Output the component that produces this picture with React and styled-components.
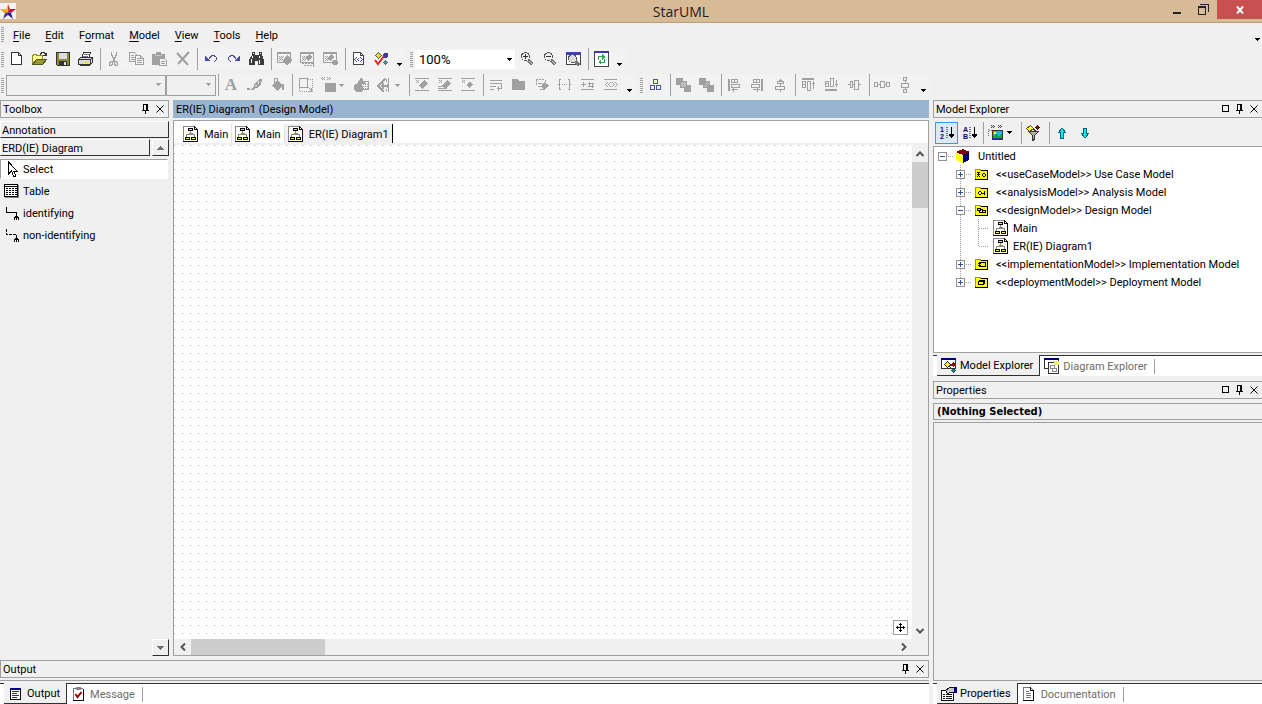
import React from 'react';
import styled, { createGlobalStyle, css } from 'styled-components';

const GRAY = '#a0a0a0';
const DARK = '#303030';
const FACE = '#f0f0f0';

const GlobalStyle = createGlobalStyle`
	* {
		box-sizing: border-box;
	}
	body {
		margin: 0;
	}
	body,
	button,
	select {
		font-family: Roboto, 'Noto Sans', sans-serif;
		font-size: 11px;
		color: #000;
	}
	button {
		margin: 0;
		padding: 0;
		border: 0;
		background: none;
		white-space: nowrap;
	}
`;

/* ---------- icons ---------- */

const Svg = ({ w = 16, h = 16, children, ...rest }) => (
	<svg
		width={w}
		height={h}
		viewBox={`0 0 ${w} ${h}`}
		fill="none"
		shapeRendering="crispEdges"
		aria-hidden="true"
		{...rest}
	>
		{children}
	</svg>
);

const StarIcon = () => (
	<Svg shapeRendering="auto">
		<path fill="#f4f4f8" d="M0 0h16v16H0z" />
		<path fill="#f5c400" d="M8 1l-2 5H0l5 4 3-1z" />
		<path fill="#e03030" d="M8 1l2 5-2 3z" />
		<path fill="#b81840" d="M10 6h6l-5 4-3-1z" />
		<path fill="#28209a" d="M8 9l3 1 2 6-5-4z" />
		<path fill="#5a3090" d="M8 9l-3 1-2 6 5-4z" />
		<path fill="#f09020" d="M0 6l8 3-3 1z" />
	</Svg>
);

const NewIcon = () => (
	<Svg>
		<path fill="#fff" stroke="#333" d="M3.5 1.5h7l3 3v9h-10z" />
		<path stroke="#333" d="M10.5 1v3.5H14" />
	</Svg>
);
const OpenIcon = () => (
	<Svg>
		<path fill="#ffff8c" stroke="#8a8a2a" d="M1.5 13.5v-9h1v-1h3v1h6v4" />
		<path fill="#9a9a32" stroke="#55551c" d="M1.5 13.5l4-5h10l-4 5z" />
		<path stroke="#333" d="M9 3.5v-1h1v-1h3v1h1v2M12 4.5h3M15.5 2v3" />
	</Svg>
);
const SaveIcon = () => (
	<Svg>
		<path fill="#8c8c34" stroke="#333" d="M2.5 1.5h13v13h-12l-1-1z" />
		<path fill="#dcdcdc" d="M5 2h8v6H5z" />
		<path fill="#333" d="M5 10h8v4H5z" />
		<path fill="#dcdcdc" d="M10 11h2v3h-2z" />
	</Svg>
);
const PrintIcon = () => (
	<Svg>
		<path fill="#fff" stroke="#333" d="M4.5 7.5l2-6h7l-2 6z" />
		<path stroke="#777" d="M7 3.5h5M6 5.5h5" />
		<path fill="#d8d8d8" stroke="#333" d="M1.5 8.5l2-2h12v5l-2 2h-12z" />
		<path stroke="#333" d="M1 8.5h12v5M3 14.5h10M13.5 8.5l2-2" />
		<path stroke="#e6e000" d="M8 11.5h3" />
	</Svg>
);
const CutIcon = () => (
	<Svg>
		<path stroke={GRAY} d="M6 1v3h1v2h1v2h1v2h1M11 1v3h-1v2H9v2H8v2H7" />
		<path stroke={GRAY} d="M5.5 10.5h2v3h-1v1h-2v-3h1zM9.5 10.5h2v1h1v3h-2v-1h-1z" />
	</Svg>
);
const CopyIcon = () => (
	<Svg>
		<path fill="#f4f4f4" stroke={GRAY} d="M1.5 1.5h5l3 3v6h-8z" />
		<path stroke={GRAY} d="M3 4.5h3M3 6.5h4M3 8.5h4" />
		<path fill="#f4f4f4" stroke={GRAY} d="M7.5 4.5h5l3 3v6h-8z" />
		<path stroke={GRAY} d="M9 7.5h3M9 9.5h5M9 11.5h5M12.5 4.5v3h3" />
	</Svg>
);
const PasteIcon = () => (
	<Svg>
		<path fill={GRAY} d="M1 3h4V1h5v2h4v11H1z" />
		<path stroke="#e4e4e4" strokeDasharray="1 1" d="M4 4.5h7" />
		<path fill="#f4f4f4" stroke={GRAY} d="M8.5 7.5h5l2 2v5h-7z" />
		<path stroke={GRAY} d="M10 10.5h4M10 12.5h4" />
	</Svg>
);
const DeleteIcon = () => (
	<Svg shapeRendering="auto">
		<path stroke={GRAY} strokeWidth="2" d="M3 2l11 12M15 1L4 13" />
	</Svg>
);
const UndoIcon = () => (
	<Svg>
		<path fill="#4848b0" d="M3 5h1v1h1v1h1v1h1v1h1v1H3z" />
		<path
			stroke="#4848b0"
			d="M7 7.5h1M7 6.5h2M8 5.5h2M9 4.5h4M12 5.5h2M14 6.5h1M14 7.5h1M14 8.5h1M13 9.5h1M12 10.5h1"
		/>
	</Svg>
);
const RedoIcon = () => (
	<Svg>
		<path fill="#4848b0" d="M15 5h-1v1h-1v1h-1v1h-1v1h-1v1h5z" />
		<path
			stroke="#4848b0"
			d="M10 7.5h1M9 6.5h2M8 5.5h2M5 4.5h4M4 5.5h2M3 6.5h1M3 7.5h1M3 8.5h1M4 9.5h1M5 10.5h1"
		/>
	</Svg>
);
const FindIcon = () => (
	<Svg>
		<path fill="#3c3c3c" d="M4 1h3v3h4V1h3v3l2 5v5h-6v-4H7v4H1V9l3-5z" />
		<path stroke="#fff" d="M4.5 5v2M3.5 8v4M11.5 5v2M11.5 9v4M5 2.5h1M12 2.5h1" />
	</Svg>
);
const WindowArt = () => (
	<>
		<path stroke={GRAY} d="M1.5 2.5h13v9h-13z" />
		<path stroke={GRAY} strokeWidth="2" d="M1 2h14" />
		<path stroke={GRAY} strokeDasharray="1 1" d="M3 5.5h5M4 6.5h4M3 7.5h4M4 8.5h4M3 9.5h4" />
	</>
);
const ViewFitIcon = () => (
	<Svg>
		<WindowArt />
		<path fill={GRAY} d="M11 4l5 5-5 6-5-5 2-1-1-1z" />
	</Svg>
);
const ViewSelectIcon = () => (
	<Svg>
		<WindowArt />
		<path fill={GRAY} d="M10 3l3 3-4 4-3-3z" />
		<path stroke={GRAY} strokeDasharray="2 1" d="M3 12.5h12M5 14.5h10M14.5 9v7" />
	</Svg>
);
const ViewMarkIcon = () => (
	<Svg>
		<WindowArt />
		<path fill={GRAY} d="M9 3l3 3-4 4-3-3zM11 9h4v1h1v3h-1v1h-4v-1h-1v-3h1z" />
	</Svg>
);
const CodeDocIcon = () => (
	<Svg>
		<path fill="#fff" stroke="#444" d="M3.5 1.5h7l3 3v9h-10z" />
		<path stroke="#444" d="M10.5 1v3.5H14" />
		<path
			stroke="#4040b0"
			d="M6 6.5h1M5 7.5h1M4 8.5h1M5 9.5h1M6 10.5h1M8 7.5h1M7 8.5h1M8 9.5h1M10 6.5h1M11 7.5h1M12 8.5h1M11 9.5h1M10 10.5h1"
		/>
	</Svg>
);
const ValidateIcon = () => (
	<Svg>
		<path fill="#e8e020" stroke="#555" d="M5.5 1.5l3 3-3 3-3-3z" />
		<path fill="#3838b8" d="M11 2h4v3l-2 2h-3V4z" />
		<path fill="#30b0b0" stroke="#555" d="M12.5 9.5l2 2-2 2-2-2z" />
		<path stroke="#e02828" strokeWidth="2" shapeRendering="auto" d="M2 9l3 4 6-8" />
	</Svg>
);
const Lens = ({ sign }) => (
	<Svg>
		<circle cx="6.5" cy="5.5" r="4" fill="#eee" stroke="#555" />
		<path stroke="#777" strokeWidth="3" d="M9.5 9.5l4 4" />
		<path stroke="#ccc" d="M10 10l3 3" />
		<path stroke="#333" d={sign === '+' ? 'M4 5.5h5M6.5 3v5' : 'M4 5.5h5'} />
	</Svg>
);
const ZoomFitIcon = () => (
	<Svg>
		<path fill="#fff" stroke="#444" d="M1.5 1.5h14v12h-14z" />
		<path fill="#4040b0" d="M1 1h15v3H1z" />
		<circle cx="7.5" cy="7.5" r="4" fill="#ddd" stroke="#555" />
		<path stroke="#777" strokeWidth="3" d="M10.5 10.5l4 4" />
	</Svg>
);
const RefreshIcon = () => (
	<Svg>
		<path fill="#fff" stroke="#444" d="M1.5 .5h14v15h-14z" />
		<path stroke="#3838b0" strokeWidth="2" d="M1 1h15" />
		<path fill="#30a850" d="M9 3l3 3-3 3zM8 8v6l-3-3z" />
		<path stroke="#30a850" d="M9 5.5H5.5V9M8 11.5h3.5V8" />
	</Svg>
);

const BrushIcon = () => (
	<Svg>
		<path fill={GRAY} d="M1 11h3v2H1zM13 2h3v2l-1 3-2 3-3 1h-1l-1 2H5v-1l3-3 1-3z" />
		<path stroke="#f0f0f0" d="M12.5 4v3M9 8.5h2" />
	</Svg>
);
const BucketIcon = () => (
	<Svg>
		<path fill={GRAY} d="M8 3l6 5-5 6-6-5z" />
		<path stroke={GRAY} d="M5.5 6V1.5h3V6" />
		<path fill={GRAY} d="M13 7h2v6h-2z" />
	</Svg>
);
const AutoResizeIcon = () => (
	<Svg>
		<path stroke={GRAY} d="M2.5 1.5h8v9h-8z" />
		<path stroke={GRAY} strokeDasharray="1 1" d="M11 2.5h4.5v12H2.5V11" />
		<path stroke={GRAY} d="M11 10l4 4M14.5 11v3.5H11" />
	</Svg>
);
const StereotypeIcon = () => (
	<Svg>
		<path fill={GRAY} d="M5 6h11v9H5z" />
		<path
			stroke={GRAY}
			d="M2 .5h1M4 .5h1M1 1.5h1M3 1.5h1M2 2.5h1M4 2.5h1M7 .5h1M9 .5h1M8 1.5h1M10 1.5h1M7 2.5h1M9 2.5h1"
		/>
	</Svg>
);
const ShapesIcon = () => (
	<Svg>
		<path fill="#f0f0f0" stroke={GRAY} d="M8.5 4.5h7v8h-7z" />
		<path stroke={GRAY} strokeDasharray="1 1" d="M10 7.5h5M10 9.5h5M10 11.5h5" />
		<path fill={GRAY} d="M8 0l5 7H4zM2 7h5l3 2v4l-2 2H3l-2-2V8z" />
	</Svg>
);
const LineStyleIcon = () => (
	<Svg>
		<path stroke={GRAY} strokeWidth="2" d="M9 2L2 9l6 6M7 6v6M5 9h6" />
		<path stroke={GRAY} d="M12.5 1v14M10.5 2v3M10.5 12v2M11.5 7v4" />
	</Svg>
);
const SuppressIcon = ({ variant }) => (
	<Svg>
		<path stroke={GRAY} d="M1 1.5h14M1 13.5h14M2 3.5h1M4 3.5h1M3 4.5h1M2 5.5h1M4 5.5h1" />
		{variant === 'small' ? (
			<path fill={GRAY} d="M10 5l3 2-3 4-4-3z" />
		) : (
			<path fill={GRAY} d="M10 3l4 3-5 6-4-3z" />
		)}
		{variant === 'lines' && <path stroke={GRAY} d="M1 9.5h7M1 11.5h9" />}
	</Svg>
);
const WordWrapIcon = () => (
	<Svg>
		<path stroke={GRAY} d="M2 3.5h12M2 6.5h11v5H9M2 9.5h6M2 12.5h4M10.5 9v5" />
	</Svg>
);
const PackageIcon = () => (
	<Svg>
		<path fill={GRAY} d="M1 2h6l1 2h6v9H1z" />
	</Svg>
);
const ShowOpsIcon = () => (
	<Svg>
		<path stroke={GRAY} strokeDasharray="2 1" d="M2 2.5h9M2.5 3v5M11.5 3v2" />
		<path fill={GRAY} d="M10 5l5 3-4 5-4-3z" />
		<path stroke={GRAY} d="M4 9.5h5M6 12.5h5M4 6.5h4" />
	</Svg>
);
const BracesIcon = () => (
	<Svg>
		<path stroke={GRAY} d="M4 2.5H2.5v5H1M2.5 8v4.5H4M11 2.5h1.5v5H14M12.5 8v4.5H11" />
		<path stroke={GRAY} strokeDasharray="1 1" d="M5 7.5h6" />
	</Svg>
);
const VisibilityIcon = () => (
	<Svg>
		<path stroke={GRAY} d="M1 2.5h13M1 12.5h13M1 7.5h5M3.5 5v5M8 6.5h6M8 9.5h6M9.5 5v5M12.5 6v5" />
	</Svg>
);
const GuillemetIcon = () => (
	<Svg>
		<path
			stroke={GRAY}
			d="M1 2.5h13M1 12.5h13M4 5.5h1M3 6.5h1M2 7.5h1M3 8.5h1M4 9.5h1M7 5.5h1M6 6.5h1M5 7.5h1M6 8.5h1M7 9.5h1M9 5.5h1M10 6.5h1M11 7.5h1M10 8.5h1M9 9.5h1M12 5.5h1M13 6.5h1M14 7.5h1M13 8.5h1M12 9.5h1"
		/>
	</Svg>
);
const LayoutIcon = () => (
	<Svg>
		<path stroke="#4848e0" d="M6.5 2.5h4v4h-4zM3.5 8.5h4v4h-4zM9.5 8.5h4v4h-4z" />
	</Svg>
);
const FrontIcon = ({ back }) => (
	<Svg>
		<path fill={GRAY} d="M1 1h7v7H1zM9 8h7v7H9z" />
		<path fill={back ? '#c8c8c8' : '#d8d8d8'} stroke={GRAY} d="M5.5 4.5h6v6h-6z" />
		<path stroke={GRAY} strokeDasharray="1 1" d="M6 5.5h6M7 6.5h5M6 7.5h6M7 8.5h5M6 9.5h6" />
		{back && <path fill={GRAY} d="M4 4h4v4H4zM9 8h3v3H9z" />}
	</Svg>
);
const AlignLeftIcon = () => (
	<Svg>
		<path fill={GRAY} d="M2 2h2v12H2z" />
		<path stroke={GRAY} d="M5.5 2.5h6v3h-6zM5.5 7.5h8v3h-8zM5 12.5h7M7.5 11v4M8.5 3v2" />
	</Svg>
);
const AlignRightIcon = () => (
	<Svg>
		<path fill={GRAY} d="M12 2h2v12h-2z" />
		<path stroke={GRAY} d="M4.5 2.5h6v3h-6zM2.5 7.5h8v3h-8zM4 12.5h7M8.5 11v4M7.5 3v2" />
	</Svg>
);
const AlignCenterIcon = () => (
	<Svg>
		<path stroke={GRAY} d="M5.5 4.5h6v2h-6zM3.5 9.5h9v3h-9zM8.5 2v2M8.5 7v2M8.5 13v2M7 3.5h3" />
	</Svg>
);
const AlignTopIcon = () => (
	<Svg>
		<path fill={GRAY} d="M2 1h12v2H2z" />
		<path stroke={GRAY} d="M2.5 4.5h3v6h-3zM7.5 4.5h3v9h-3zM13.5 4v8M12 6.5h3M3 7.5h2" />
	</Svg>
);
const AlignBottomIcon = () => (
	<Svg>
		<path fill={GRAY} d="M2 12h12v2H2z" />
		<path stroke={GRAY} d="M2.5 4.5h3v5h-3zM7.5 1.5h3v8h-3zM13.5 3v7M12 7.5h3M3 6.5h2" />
	</Svg>
);
const AlignMiddleIcon = () => (
	<Svg>
		<path stroke={GRAY} d="M4.5 4.5h2v6h-2zM8.5 3.5h4v9h-4zM2 7.5h2M7 7.5h1M13 7.5h2" />
	</Svg>
);
const SpaceHIcon = () => (
	<Svg>
		<path stroke={GRAY} d="M.5 5.5h3v4h-3zM6.5 4.5h4v6h-4zM12.5 5.5h3v4h-3zM4 7.5h2M11 7.5h1" />
	</Svg>
);
const SpaceVIcon = () => (
	<Svg>
		<path stroke={GRAY} d="M6.5 .5h3v3h-3zM4.5 6.5h7v4h-7zM6.5 12.5h3v3h-3zM8 4v2M8 11v1" />
	</Svg>
);

const PinIcon = () => (
	<Svg w={8} h={10}>
		<path stroke="#000" d="M1.5 6V.5h4V6M0 6.5h7M3.5 7v3M4.5 1v5" />
	</Svg>
);
const CloseIcon = () => (
	<Svg w={8} h={8} shapeRendering="auto">
		<path stroke="#000" d="M.5 .5l7 7M7.5 .5l-7 7" />
	</Svg>
);
const MaxIcon = () => (
	<Svg w={8} h={8}>
		<path stroke="#000" d="M.5 .5h6v6h-6z" />
	</Svg>
);
const DownMark = ({ color = '#000' }) => (
	<Svg w={5} h={3}>
		<path fill={color} d="M0 0h5v1H0zM1 1h3v1H1zM2 2h1v1H2z" />
	</Svg>
);
const Chevron = ({ turn = 0 }) => (
	<Svg w={10} h={10} shapeRendering="auto">
		<path stroke="#555" strokeWidth="2" d="M1.5 7L5 3.5 8.5 7" transform={`rotate(${turn} 5 5)`} />
	</Svg>
);
const Triangle = ({ up }) => (
	<Svg w={7} h={4}>
		<path
			fill="#6e6e6e"
			d={up ? 'M3 0h1v1H3zM2 1h3v1H2zM1 2h5v1H1zM0 3h7v1H0z' : 'M0 0h7v1H0zM1 1h5v1H1zM2 2h3v1H2zM3 3h1v1H3z'}
		/>
	</Svg>
);

const DiagramIcon = () => (
	<Svg w={15} h={16}>
		<path fill="#fff" d="M0 0h11l4 4v12H0z" />
		<path stroke="#888" d="M.5 16V.5H11" />
		<path stroke="#111" d="M0 15.5h14.5V3.5h-3v-3l3 3" />
		<path stroke="#888" d="M7.5 5v4M3.5 11V8.5h8V11M5.5 7.5h4" />
		<path fill="#ff0" stroke="#000" d="M5.5 2.5h4v2h-4zM2.5 11.5h4v2h-4zM8.5 11.5h4v2h-4z" />
	</Svg>
);
const CursorIcon = () => (
	<Svg>
		<path fill="#fff" stroke="#000" d="M4.5 1v12l3-3 2 5h2v-1l-2-4h3.5z" />
	</Svg>
);
const TableIcon = () => (
	<Svg>
		<path fill="#888" d="M1 2h14v13H1z" />
		<path fill="#fff" stroke="#000" d="M.5 1.5h13v12H.5z" />
		<path stroke="#000" d="M1 3.5h12" />
		<path stroke="#000" strokeDasharray="2 1" d="M2 5.5h11M2 7.5h11M2 9.5h11M2 11.5h11" />
	</Svg>
);
const RelationIcon = ({ dashed }) => (
	<Svg>
		<path stroke="#000" strokeDasharray={dashed ? '3 1' : undefined} d="M2.5 2v5.5h10V10" />
		<path fill="#000" d="M12 10h1v1h1v1h1v3h-1v-2h-1v2h-1v-2h-1v2h-1v-3h1v-1h1z" />
	</Svg>
);
const CubeIcon = () => (
	<Svg w={14} h={14}>
		<path fill="#800000" d="M0 3l7-3 7 3-7 3z" />
		<path fill="#ff0" d="M0 4l7 3v7l-7-3z" />
		<path fill="#000080" d="M7 7l6-3v7l-6 3z" />
		<path fill="#000" d="M7 6l6-3v1L7 7z" />
	</Svg>
);
const glyphs = {
	useCase: 'M2 4.5h1M4 4.5h1M2 6.5h3M3.5 4v4M2.5 9V8M4.5 9V8M8 5.5h2M8 8.5h2M7.5 6v2M10.5 6v2',
	analysis: 'M4 5.5h2M4 8.5h2M3.5 6v2M6.5 6v2M7 7.5h2M9.5 5v4',
	design: 'M2.5 4.5h3v2h-3zM7.5 6.5h3v2h-3zM6 5.5h2M4.5 7v1.5h3',
	implementation: 'M4.5 4.5h6v4h-6zM3 5.5h3M3 7.5h3',
	deployment: 'M3.5 5.5h5v3h-5zM4 4.5h5.5V8',
};
const FolderIcon = ({ kind }) => (
	<Svg w={13} h={12}>
		<path fill="#ff0" d="M0 1h6v1h6v9H0z" />
		<path stroke="#a0a000" d="M.5 11V1.5h5v1h6" />
		<path stroke="#000" d="M0 11.5h12.5V2M6 2.5h6" />
		<path stroke="#000" d={glyphs[kind]} />
	</Svg>
);
const ModelTabIcon = () => (
	<Svg>
		<path fill="#fff" stroke="#333" d="M.5 1.5h14v9H.5z" />
		<path fill="#000080" d="M0 0h15v2H0z" />
		<path fill="#ff0" stroke="#333" d="M6.5 3.5l3 3-3 3-3-3z" />
		<path fill="#a00000" d="M12 4l3 2-2 3-3-2z" />
		<path fill="#00a0a0" stroke="#333" d="M12.5 10.5l2 2-2 2-2-2z" />
		<path stroke="#333" d="M8 8l4 4M9 7.5h3" />
	</Svg>
);
const DiagramTabIcon = () => (
	<Svg>
		<path fill="#fff" stroke="#333" d="M.5 1.5h14v9H.5z" />
		<path fill="#000080" d="M0 0h15v2H0z" />
		<path fill="#fff" stroke="#333" d="M4.5 4.5h6l4 3v8h-10z" />
		<path fill="#ee6" d="M10 3h5v4h-5z" />
		<path stroke="#888" d="M6.5 7.5h4v3h-4zM8.5 10.5h4v3h-4z" />
	</Svg>
);
const PropsTabIcon = () => (
	<Svg>
		<path fill="#fff" stroke="#111" d="M.5 4.5h12v10H.5z" />
		<path stroke="#111" d="M2 8.5h2M5 8.5h6M2 10.5h2M5 10.5h6M2 12.5h2M5 12.5h6" />
		<path fill="#c8c8c8" stroke="#111" d="M4.5 4.5l4-3h5v5h-4l-3 1z" />
		<path fill="#000080" d="M13 1h3v6h-3z" />
	</Svg>
);
const DocTabIcon = () => (
	<Svg>
		<path fill="#fff" stroke="#777" d="M1.5 14.5v-13h7l3 3" />
		<path stroke="#111" d="M8.5 1v3.5h3v10H1" />
		<path stroke="#777" d="M4 5.5h3M4 7.5h5M4 9.5h5M4 11.5h5" />
	</Svg>
);
const OutputTabIcon = () => (
	<Svg>
		<path fill="#fff" stroke="#111" d="M2.5 2.5h10v11h-10z" />
		<path fill="#000080" d="M2 2h11v2H2z" />
		<path stroke="#333" d="M4 5.5h7M4 7.5h5M4 9.5h7M4 11.5h5" />
	</Svg>
);
const MessageTabIcon = () => (
	<Svg>
		<path fill="#fff" stroke="#777" d="M2.5 14V2.5h9" />
		<path stroke="#111" d="M2 14.5h10.5v-12" />
		<path fill="#888" d="M5 1h5v3H5z" />
		<path stroke="#900" strokeWidth="2" shapeRendering="auto" d="M4.5 8l2 3 4-5" />
	</Svg>
);
const SortIcon = ({ alpha }) => (
	<Svg>
		<SortText x="1" y="7">
			{alpha ? 'A' : '1'}
		</SortText>
		<SortText x="1" y="14">
			{alpha ? 'B' : '2'}
		</SortText>
		<path stroke="#777" strokeDasharray="1 1" d="M7.5 2v12M8.5 2v12" />
		<path stroke="#000" d="M12.5 2v11M10 9.5h5M10 10.5h5M11 11.5h3" />
	</Svg>
);
const StereoViewIcon = () => (
	<Svg>
		<path
			stroke="#444"
			d="M3 .5h1M5 .5h1M4 1.5h1M6 1.5h1M3 2.5h1M5 2.5h1M10 .5h1M12 .5h1M11 1.5h1M13 1.5h1M10 2.5h1M12 2.5h1"
		/>
		<path stroke="#777" strokeDasharray="1 1" d="M.5 4v7M1 5.5h4" />
		<path fill="#20b8e0" stroke="#333" d="M4.5 5.5h10v9h-10z" />
		<path fill="#20a040" d="M5 11l3-2 3 2 3-2v5H5z" />
		<path fill="#ff0" d="M6 7h2v2H6z" />
		<path fill="#3030b0" d="M5 13h9v1H5z" />
	</Svg>
);
const FilterIcon = () => (
	<Svg>
		<path fill="#b0b0b0" stroke="#333" d="M2.5 6.5h10l-4 4v4l-2 1v-5z" />
		<path fill="#ff0" stroke="#555" d="M4.5 .5l3 3-4 3-3-3z" />
		<path fill="#a00000" stroke="#300" d="M11.5 .5l2 2-2 2-2-2z" />
		<path stroke="#333" d="M7 3.5l3 3" />
	</Svg>
);
const ArrowIcon = ({ down }) => (
	<Svg>
		<path
			fill="#00f0f0"
			stroke="#006080"
			d={down ? 'M6.5 3.5h3v5h2L8 13 4.5 8.5h2z' : 'M6.5 13.5h3v-6h2L8 3 4.5 7.5h2z'}
		/>
	</Svg>
);

const SortText = styled.text`
	font: bold 7px 'Liberation Sans', sans-serif;
	fill: #00007c;
`;

const FontLetter = styled.span`
	width: 16px;
	font: bold 17px/20px 'Liberation Serif', serif;
	text-align: center;
	color: ${GRAY};
`;

const FontIcon = () => <FontLetter>A</FontLetter>;

/* ---------- shell ---------- */

const Window = styled.div`
	display: flex;
	flex-direction: column;
	height: 100vh;
	overflow: hidden;
	background: ${FACE};
`;

const TitleBar = styled.header`
	display: flex;
	flex: none;
	height: 23px;
	padding-top: 3px;
	background: #d7bb96;
	border-bottom: 1px solid #b89e7c;
`;

const Title = styled.h1`
	flex: 1;
	margin: 0;
	padding-left: 183px;
	font: 14px/17px 'Open Sans', 'Noto Sans', sans-serif;
	text-align: center;
	color: #222;
`;

const CaptionButton = styled.button`
	display: flex;
	align-items: center;
	justify-content: center;
	width: ${({ $close }) => ($close ? 45 : 27)}px;
	height: 19px;
	margin-top: -3px;
	background: ${({ $close }) => ($close ? '#c75050' : 'transparent')};
`;

const MenuBar = styled.nav`
	display: flex;
	flex: none;
	align-items: center;
	height: 23px;
	padding-left: 1px;
`;

const MenuList = styled.div`
	display: flex;
	gap: 15px;
	padding: 2px 0 0 9px;
`;

const MenuItem = styled.button`
	height: 19px;

	u {
		text-underline-offset: 2px;
	}
`;

const Grip = styled.span`
	flex: none;
	width: 3px;
	height: 15px;
	background: repeating-linear-gradient(${GRAY} 0 1px, transparent 1px 2px);
`;

const MenuOverflow = styled.button`
	margin-left: auto;
	padding: 6px 2px 0;
`;

const ToolRow = styled.div`
	display: flex;
	flex: none;
	align-items: center;
	gap: 4px;
	height: 26px;
	padding-left: 1px;
`;

const ToolGroup = styled.div`
	display: flex;
	align-items: center;
	height: 22px;
	background: #f2f2f2;
`;

const ToolButton = styled.button`
	display: flex;
	flex: none;
	align-items: center;
	gap: 3px;
	width: ${({ $menu }) => ($menu ? 33 : 23)}px;
	height: 22px;
	padding-left: ${({ $checked }) => ($checked ? 3 : 4)}px;
	${({ $checked }) =>
		$checked &&
		css`
			background: #dbe9f6;
			border: 1px solid #3399ff;
		`}
`;

const Separator = styled.span`
	flex: none;
	width: ${({ $tight }) => ($tight ? 3 : 5)}px;
	height: 22px;
	border-right: 1px solid ${GRAY};
`;

const OverflowButton = styled.button`
	display: flex;
	align-items: flex-end;
	justify-content: center;
	width: 14px;
	height: 22px;
	padding-bottom: 4px;
`;

const Combo = styled.div`
	position: relative;
	width: ${({ $width }) => $width}px;
	margin-left: ${({ $joined }) => ($joined ? 0 : 2)}px;

	select {
		display: block;
		width: 100%;
		height: ${({ $flat }) => ($flat ? 21 : 19)}px;
		padding: 0 4px;
		appearance: none;
		border: ${({ $flat }) => ($flat ? `1px solid ${GRAY}` : '0')};
		border-radius: 0;
		background: ${({ $flat }) => ($flat ? FACE : '#fff')};
		font-size: 13px;
		opacity: 1;
	}
	svg {
		position: absolute;
		top: 8px;
		right: ${({ $flat }) => ($flat ? 5 : 3)}px;
		pointer-events: none;
	}
`;

const Body = styled.div`
	display: flex;
	flex: 1;
	gap: 4px;
	min-height: 0;
	padding-top: 2px;
`;

const MainColumn = styled.div`
	display: flex;
	flex: 1;
	flex-direction: column;
	min-width: 0;
`;

const Workspace = styled.div`
	display: flex;
	flex: 1;
	gap: 4px;
	min-height: 0;
	margin-bottom: 4px;
`;

/* ---------- docked panels ---------- */

const PanelHeader = styled.header`
	display: flex;
	flex: none;
	align-items: center;
	height: 18px;
	padding: 0 4px 0 2px;
	border: 1px solid ${GRAY};
	${({ $cut }) => $cut && 'border-right: 0;'}
`;

const PanelTitle = styled.h2`
	flex: 1;
	margin: 0;
	padding-top: 2px;
	font-size: 11px;
	font-weight: normal;
	line-height: 14px;
`;

const PanelButton = styled.button`
	display: flex;
	align-items: center;
	justify-content: center;
	width: 8px;
	height: 14px;
	margin-left: 6px;
`;

const TabStrip = styled.div`
	display: flex;
	flex: none;
	height: 21px;
	padding-left: 4px;
	background: #fff;
	border-top: 1px solid ${DARK};
`;

const Tab = styled.button`
	display: flex;
	align-items: center;
	gap: 3px;
	padding: 0 7px 0 4px;
	color: #6d6d6d;
	${({ $active }) =>
		$active &&
		css`
			height: 21px;
			margin-top: -1px;
			padding: 1px 6px 0 4px;
			color: #000;
			background: ${FACE};
			border-right: 1px solid ${DARK};
			border-bottom: 1px solid ${DARK};
		`}
`;

const TabDivider = styled.span`
	width: 1px;
	height: 15px;
	margin-top: 3px;
	background: ${GRAY};
`;

const Toolbox = styled.aside`
	display: flex;
	flex: none;
	flex-direction: column;
	width: 169px;
`;

const ToolboxGroup = styled.div`
	display: flex;
	gap: 2px;
	margin-top: ${({ $first }) => ($first ? 3 : 1)}px;
`;

const raised = css`
	height: 17px;
	border: 1px solid ${DARK};
	border-top-color: #fff;
	border-left-color: #fff;
`;

const GroupButton = styled.button`
	${raised}
	flex: 1;
	padding: 1px 0 0 1px;
	line-height: 15px;
	text-align: left;
`;

const SpinButton = styled.button`
	${raised}
	display: flex;
	align-items: center;
	align-self: flex-end;
	justify-content: center;
	width: 17px;
`;

const ToolList = styled.div`
	display: flex;
	flex: 1;
	flex-direction: column;
	gap: 2px;
	padding: 3px 1px 0 0;
`;

const ToolItem = styled.button`
	display: flex;
	align-items: center;
	gap: 3px;
	height: 20px;
	padding-left: 3px;
	text-align: left;
	border: 1px solid transparent;
	${({ $selected }) =>
		$selected &&
		css`
			background: #fff;
			border-color: ${GRAY} #fff #fff ${GRAY};
		`}
`;

/* ---------- diagram area ---------- */

const Editor = styled.main`
	display: flex;
	flex: 1;
	flex-direction: column;
	gap: 2px;
	min-width: 0;
`;

const EditorTitle = styled.h2`
	flex: none;
	height: 18px;
	margin: 0;
	padding: 2px 0 0 3px;
	font-size: 11px;
	font-weight: normal;
	line-height: 16px;
	background: #99b4d1;
`;

const EditorFrame = styled.div`
	display: flex;
	flex: 1;
	flex-direction: column;
	min-height: 0;
	border: 1px solid ${GRAY};
`;

const DiagramTabs = styled.div`
	display: flex;
	flex: none;
	align-items: flex-end;
	height: 24px;
	padding-left: 6px;
	background: #fff;
	border-bottom: 2px solid ${FACE};
`;

const DiagramTab = styled.button`
	display: flex;
	align-items: center;
	gap: 6px;
	height: 19px;
	padding: 0 3px;
	line-height: 13px;
	border-right: 1px solid ${({ $active }) => ($active ? '#000' : '#e3e3e3')};
	background: ${({ $active }) => ($active ? FACE : '#fff')};
`;

const TabName = styled.span`
	padding-top: 2px;
`;

const CanvasRow = styled.div`
	display: flex;
	flex: 1;
	min-height: 0;
`;

const Canvas = styled.div`
	position: relative;
	display: flex;
	flex: 1;
	background: #fff;
`;

const Page = styled.div`
	flex: ${({ $next }) => ($next ? '0 0 21px' : 1)};
	background-image: conic-gradient(from 270deg at 1px 1px, #b4b4b4 90deg, transparent 0);
	background-size: 8px 8px;
`;

const Navigator = styled.button`
	position: absolute;
	right: 4px;
	bottom: 4px;
	display: flex;
	align-items: center;
	justify-content: center;
	width: 15px;
	height: 15px;
	background: #fff;
	border: 1px solid ${GRAY};
`;

const ScrollBar = styled.div`
	display: flex;
	flex: 0 0 16px;
	flex-direction: ${({ $vertical }) => ($vertical ? 'column' : 'row')};
	padding-right: ${({ $vertical }) => ($vertical ? 0 : 16)}px;
`;

const ScrollButton = styled.button`
	display: flex;
	flex: 0 0 17px;
	align-items: center;
	justify-content: center;
`;

const ScrollTrack = styled.div`
	display: flex;
	flex: 1;
	flex-direction: inherit;
`;

const ScrollThumb = styled.div`
	flex: 0 0 ${({ $part }) => $part}%;
	background: #cdcdcd;
`;

const OutputRule = styled.div`
	height: 1px;
	margin: 2px 0;
	background: ${GRAY};
`;

/* ---------- right side ---------- */

const Sidebar = styled.aside`
	display: flex;
	flex: none;
	flex-direction: column;
	width: 329px;
`;

const ExplorerTools = styled.div`
	display: flex;
	flex: none;
	align-items: center;
	height: 28px;
	padding: 1px 0 0 2px;
`;

const Tree = styled.ul`
	flex: 207 1 0;
	min-height: 0;
	margin: 0 0 2px;
	padding: 0 0 0 4px;
	overflow: hidden;
	list-style: none;
	background: #fff;
	border: 1px solid ${GRAY};
	border-right: 0;
`;

const Branch = styled.ul`
	margin: 0;
	padding: 0 0 0 18px;
	list-style: none;
	background: linear-gradient(${GRAY} 50%, transparent 0) 22px 0 / 1px 2px repeat-y;
`;

const Node = styled.li`
	&:last-child > div {
		background: linear-gradient(#fff, #fff) 4px 10px / 1px 8px no-repeat;
	}
`;

const NodeRow = styled.div`
	display: flex;
	align-items: center;
	height: 18px;
	white-space: nowrap;
`;

const Toggle = styled.button`
	display: flex;
	width: 9px;
	height: 9px;
	background: #fff;
`;

const Twig = styled.span`
	width: ${({ $leaf }) => ($leaf ? 9 : 5)}px;
	height: 1px;
	margin-left: ${({ $leaf }) => ($leaf ? 5 : 1)}px;
	background: repeating-linear-gradient(90deg, ${GRAY} 0 1px, transparent 1px 2px);
`;

const NodeIcon = styled.span`
	display: flex;
	flex: none;
	justify-content: center;
	width: ${({ $leaf }) => ($leaf ? 15 : 14)}px;
	margin: 0 ${({ $leaf }) => ($leaf ? 5 : 8)}px 0 ${({ $leaf }) => ($leaf ? 5 : 3)}px;
`;

const Selection = styled.div`
	flex: none;
	height: 17px;
	margin: 4px 0 2px;
	padding-left: 3px;
	font: bold 11px/15px 'DejaVu Sans Condensed', 'Noto Sans', sans-serif;
	border: 1px solid ${GRAY};
	border-right: 0;
`;

const PropertyArea = styled.div`
	flex: 259 1 0;
	min-height: 0;
	margin-bottom: 2px;
	border: 1px solid ${GRAY};
	border-right: 0;
`;

const Gap = styled.div`
	flex: none;
	height: 5px;
`;

/* ---------- data ---------- */

const menus = ['File', 'Edit', 'Format', 'Model', 'View', 'Tools', 'Help'];
const hotkeys = { Format: 1 };

const fileTools = [
	[['New', NewIcon], ['Open', OpenIcon], ['Save', SaveIcon], ['Print', PrintIcon]],
	[['Cut', CutIcon], ['Copy', CopyIcon], ['Paste', PasteIcon], ['Delete', DeleteIcon]],
	[['Undo', UndoIcon], ['Redo', RedoIcon], ['Find', FindIcon]],
	[['Fit view', ViewFitIcon], ['Select view', ViewSelectIcon], ['Mark view', ViewMarkIcon]],
	[['Code', CodeDocIcon], ['Verify', ValidateIcon]],
];

const formatTools = [
	[['Font', FontIcon], ['Line color', BrushIcon], ['Fill color', BucketIcon]],
	[
		['Auto resize', AutoResizeIcon],
		['Stereotype display', StereotypeIcon, { menu: true }],
		['Shapes', ShapesIcon],
		['Line style', LineStyleIcon, { menu: true }],
	],
	[
		['Suppress attributes', SuppressIcon],
		['Suppress operations', SuppressIcon, { variant: 'lines' }],
		['Suppress literals', SuppressIcon, { variant: 'small' }],
	],
	[
		['Word wrap', WordWrapIcon],
		['Show parent', PackageIcon],
		['Show operations', ShowOpsIcon],
		['Show properties', BracesIcon],
		['Show visibility', VisibilityIcon],
		['Show stereotype', GuillemetIcon],
	],
];

const alignTools = [
	[['Layout', LayoutIcon]],
	[['Bring to front', FrontIcon], ['Send to back', FrontIcon, { back: true }]],
	[['Align left', AlignLeftIcon], ['Align right', AlignRightIcon], ['Align center', AlignCenterIcon]],
	[['Align top', AlignTopIcon], ['Align bottom', AlignBottomIcon], ['Align middle', AlignMiddleIcon]],
	[['Space horizontally', SpaceHIcon], ['Space vertically', SpaceVIcon]],
];

const models = [
	{ kind: 'useCase', label: '<<useCaseModel>> Use Case Model' },
	{ kind: 'analysis', label: '<<analysisModel>> Analysis Model' },
	{ kind: 'design', label: '<<designModel>> Design Model', diagrams: ['Main', 'ER(IE) Diagram1'] },
	{ kind: 'implementation', label: '<<implementationModel>> Implementation Model' },
	{ kind: 'deployment', label: '<<deploymentModel>> Deployment Model' },
];

/* ---------- parts ---------- */

const MenuLabel = ({ text }) => {
	const at = hotkeys[text] || 0;
	return (
		<>
			{text.slice(0, at)}
			<u>{text[at]}</u>
			{text.slice(at + 1)}
		</>
	);
};

const Tools = ({ groups }) =>
	groups.map((group, i) => (
		<React.Fragment key={i}>
			{i > 0 && <Separator />}
			{group.map(([label, Icon, { menu, ...props } = {}]) => (
				<ToolButton key={label} aria-label={label} $menu={menu}>
					<Icon {...props} />
					{menu && <DownMark color={GRAY} />}
				</ToolButton>
			))}
		</React.Fragment>
	));

const Overflow = () => (
	<OverflowButton aria-label="More buttons">
		<DownMark />
	</OverflowButton>
);

const Header = ({ title, max, cut }) => (
	<PanelHeader $cut={cut}>
		<PanelTitle>{title}</PanelTitle>
		{max && (
			<PanelButton aria-label={`Maximize ${title}`}>
				<MaxIcon />
			</PanelButton>
		)}
		<PanelButton aria-label={`Pin ${title}`}>
			<PinIcon />
		</PanelButton>
		<PanelButton aria-label={`Close ${title}`}>
			<CloseIcon />
		</PanelButton>
	</PanelHeader>
);

const TreeToggle = ({ open }) => (
	<Toggle aria-label={open ? 'Collapse' : 'Expand'}>
		<Svg w={9} h={9}>
			<path fill="#fff" stroke="#919191" d="M.5 .5h8v8h-8z" />
			<path stroke="#3050a0" d={open ? 'M2 4.5h5' : 'M2 4.5h5M4.5 2v5'} />
		</Svg>
	</Toggle>
);

const ModelTree = () => (
	<Tree>
		<li>
			<NodeRow>
				<TreeToggle open />
				<Twig />
				<NodeIcon>
					<CubeIcon />
				</NodeIcon>
				Untitled
			</NodeRow>
			<Branch>
				{models.map(({ kind, label, diagrams }) => (
					<Node key={kind}>
						<NodeRow>
							<TreeToggle open={Boolean(diagrams)} />
							<Twig />
							<NodeIcon>
								<FolderIcon kind={kind} />
							</NodeIcon>
							{label}
						</NodeRow>
						{diagrams && (
							<Branch>
								{diagrams.map((name) => (
									<Node key={name}>
										<NodeRow>
											<Twig $leaf />
											<NodeIcon $leaf>
												<DiagramIcon />
											</NodeIcon>
											{name}
										</NodeRow>
									</Node>
								))}
							</Branch>
						)}
					</Node>
				))}
			</Branch>
		</li>
	</Tree>
);

const Tabs = ({ items }) => (
	<TabStrip role="tablist">
		{items.map(([label, Icon], i) => (
			<Tab key={label} role="tab" aria-selected={i === 0} $active={i === 0}>
				<Icon />
				{label}
			</Tab>
		))}
		<TabDivider />
	</TabStrip>
);

const App = () => (
	<>
		<GlobalStyle />
		<Window>
			<TitleBar>
				<StarIcon />
				<Title>StarUML</Title>
				<CaptionButton aria-label="Minimize">
					<Svg w={10} h={10}>
						<path fill="#222" d="M1 7h8v2H1z" />
					</Svg>
				</CaptionButton>
				<CaptionButton aria-label="Restore">
					<Svg w={11} h={11}>
						<path stroke="#222" d="M2 .5h8.5V8" />
						<path stroke="#222" d="M.5 3h7v7.5h-7z" />
						<path fill="#222" d="M0 2h8v2H0z" />
					</Svg>
				</CaptionButton>
				<CaptionButton aria-label="Close" $close>
					<Svg w={8} h={8} shapeRendering="auto">
						<path stroke="#fff" strokeWidth="2" d="M1 .5l6 7M7 .5l-6 7" />
					</Svg>
				</CaptionButton>
			</TitleBar>

			<MenuBar>
				<Grip />
				<MenuList>
					{menus.map((text) => (
						<MenuItem key={text}>
							<MenuLabel text={text} />
						</MenuItem>
					))}
				</MenuList>
				<MenuOverflow aria-label="Menu options">
					<DownMark />
				</MenuOverflow>
			</MenuBar>

			<ToolRow>
				<ToolGroup>
					<Grip />
					<Tools groups={fileTools} />
					<Overflow />
				</ToolGroup>
				<ToolGroup>
					<Grip />
					<Combo $width={100}>
						<select aria-label="Zoom">
							<option>100%</option>
						</select>
						<DownMark />
					</Combo>
					<ToolButton aria-label="Zoom in">
						<Lens sign="+" />
					</ToolButton>
					<ToolButton aria-label="Zoom out">
						<Lens sign="-" />
					</ToolButton>
					<ToolButton aria-label="Fit in window">
						<ZoomFitIcon />
					</ToolButton>
					<Separator />
					<ToolButton aria-label="Refresh">
						<RefreshIcon />
					</ToolButton>
					<Overflow />
				</ToolGroup>
			</ToolRow>

			<ToolRow>
				<ToolGroup>
					<Grip />
					<Combo $width={160} $flat>
						<select aria-label="Font name" disabled />
						<DownMark color={GRAY} />
					</Combo>
					<Combo $width={50} $flat $joined>
						<select aria-label="Font size" disabled />
						<DownMark color={GRAY} />
					</Combo>
					<Separator $tight />
					<Tools groups={formatTools} />
					<Overflow />
				</ToolGroup>
				<ToolGroup>
					<Grip />
					<Tools groups={alignTools} />
					<Overflow />
				</ToolGroup>
			</ToolRow>

			<Body>
				<MainColumn>
					<Workspace>
						<Toolbox>
							<Header title="Toolbox" />
							<ToolboxGroup $first>
								<GroupButton>Annotation</GroupButton>
							</ToolboxGroup>
							<ToolboxGroup>
								<GroupButton>ERD(IE) Diagram</GroupButton>
								<SpinButton aria-label="Scroll tools up">
									<Triangle up />
								</SpinButton>
							</ToolboxGroup>
							<ToolList>
								<ToolItem $selected>
									<CursorIcon />
									Select
								</ToolItem>
								<ToolItem>
									<TableIcon />
									Table
								</ToolItem>
								<ToolItem>
									<RelationIcon />
									identifying
								</ToolItem>
								<ToolItem>
									<RelationIcon dashed />
									non-identifying
								</ToolItem>
							</ToolList>
							<SpinButton aria-label="Scroll tools down">
								<Triangle />
							</SpinButton>
						</Toolbox>

						<Editor>
							<EditorTitle>ER(IE) Diagram1 (Design Model)</EditorTitle>
							<EditorFrame>
								<DiagramTabs role="tablist">
									{['Main', 'Main', 'ER(IE) Diagram1'].map((name, i) => (
										<DiagramTab key={i} role="tab" aria-selected={i === 2} $active={i === 2}>
											<DiagramIcon />
											<TabName>{name}</TabName>
										</DiagramTab>
									))}
								</DiagramTabs>
								<CanvasRow>
									<Canvas>
										<Page />
										<Page $next />
										<Navigator aria-label="Navigator">
											<Svg w={11} h={11}>
												<path stroke="#000" d="M1 5.5h9M5.5 1v9M4 2.5h3M4 8.5h3M2.5 4v3M8.5 4v3" />
											</Svg>
										</Navigator>
									</Canvas>
									<ScrollBar $vertical>
										<ScrollButton aria-label="Scroll up">
											<Chevron />
										</ScrollButton>
										<ScrollTrack>
											<ScrollThumb $part={10} />
										</ScrollTrack>
										<ScrollButton aria-label="Scroll down">
											<Chevron turn={180} />
										</ScrollButton>
									</ScrollBar>
								</CanvasRow>
								<ScrollBar>
									<ScrollButton aria-label="Scroll left">
										<Chevron turn={-90} />
									</ScrollButton>
									<ScrollTrack>
										<ScrollThumb $part={19} />
									</ScrollTrack>
									<ScrollButton aria-label="Scroll right">
										<Chevron turn={90} />
									</ScrollButton>
								</ScrollBar>
							</EditorFrame>
						</Editor>
					</Workspace>

					<Header title="Output" />
					<OutputRule />
					<Tabs items={[['Output', OutputTabIcon], ['Message', MessageTabIcon]]} />
				</MainColumn>

				<Sidebar>
					<Header title="Model Explorer" max cut />
					<ExplorerTools>
						<ToolButton aria-label="Sort by order" $checked>
							<SortIcon />
						</ToolButton>
						<ToolButton aria-label="Sort by name">
							<SortIcon alpha />
						</ToolButton>
						<Separator $tight />
						<ToolButton aria-label="Stereotype view" $menu>
							<StereoViewIcon />
							<DownMark />
						</ToolButton>
						<Separator />
						<ToolButton aria-label="Filter">
							<FilterIcon />
						</ToolButton>
						<Separator />
						<ToolButton aria-label="Move up">
							<ArrowIcon />
						</ToolButton>
						<ToolButton aria-label="Move down">
							<ArrowIcon down />
						</ToolButton>
					</ExplorerTools>
					<ModelTree />
					<Tabs items={[['Model Explorer', ModelTabIcon], ['Diagram Explorer', DiagramTabIcon]]} />
					<Gap />
					<Header title="Properties" max cut />
					<Selection>(Nothing Selected)</Selection>
					<PropertyArea />
					<Tabs items={[['Properties', PropsTabIcon], ['Documentation', DocTabIcon]]} />
				</Sidebar>
			</Body>
		</Window>
	</>
);

export default App;
